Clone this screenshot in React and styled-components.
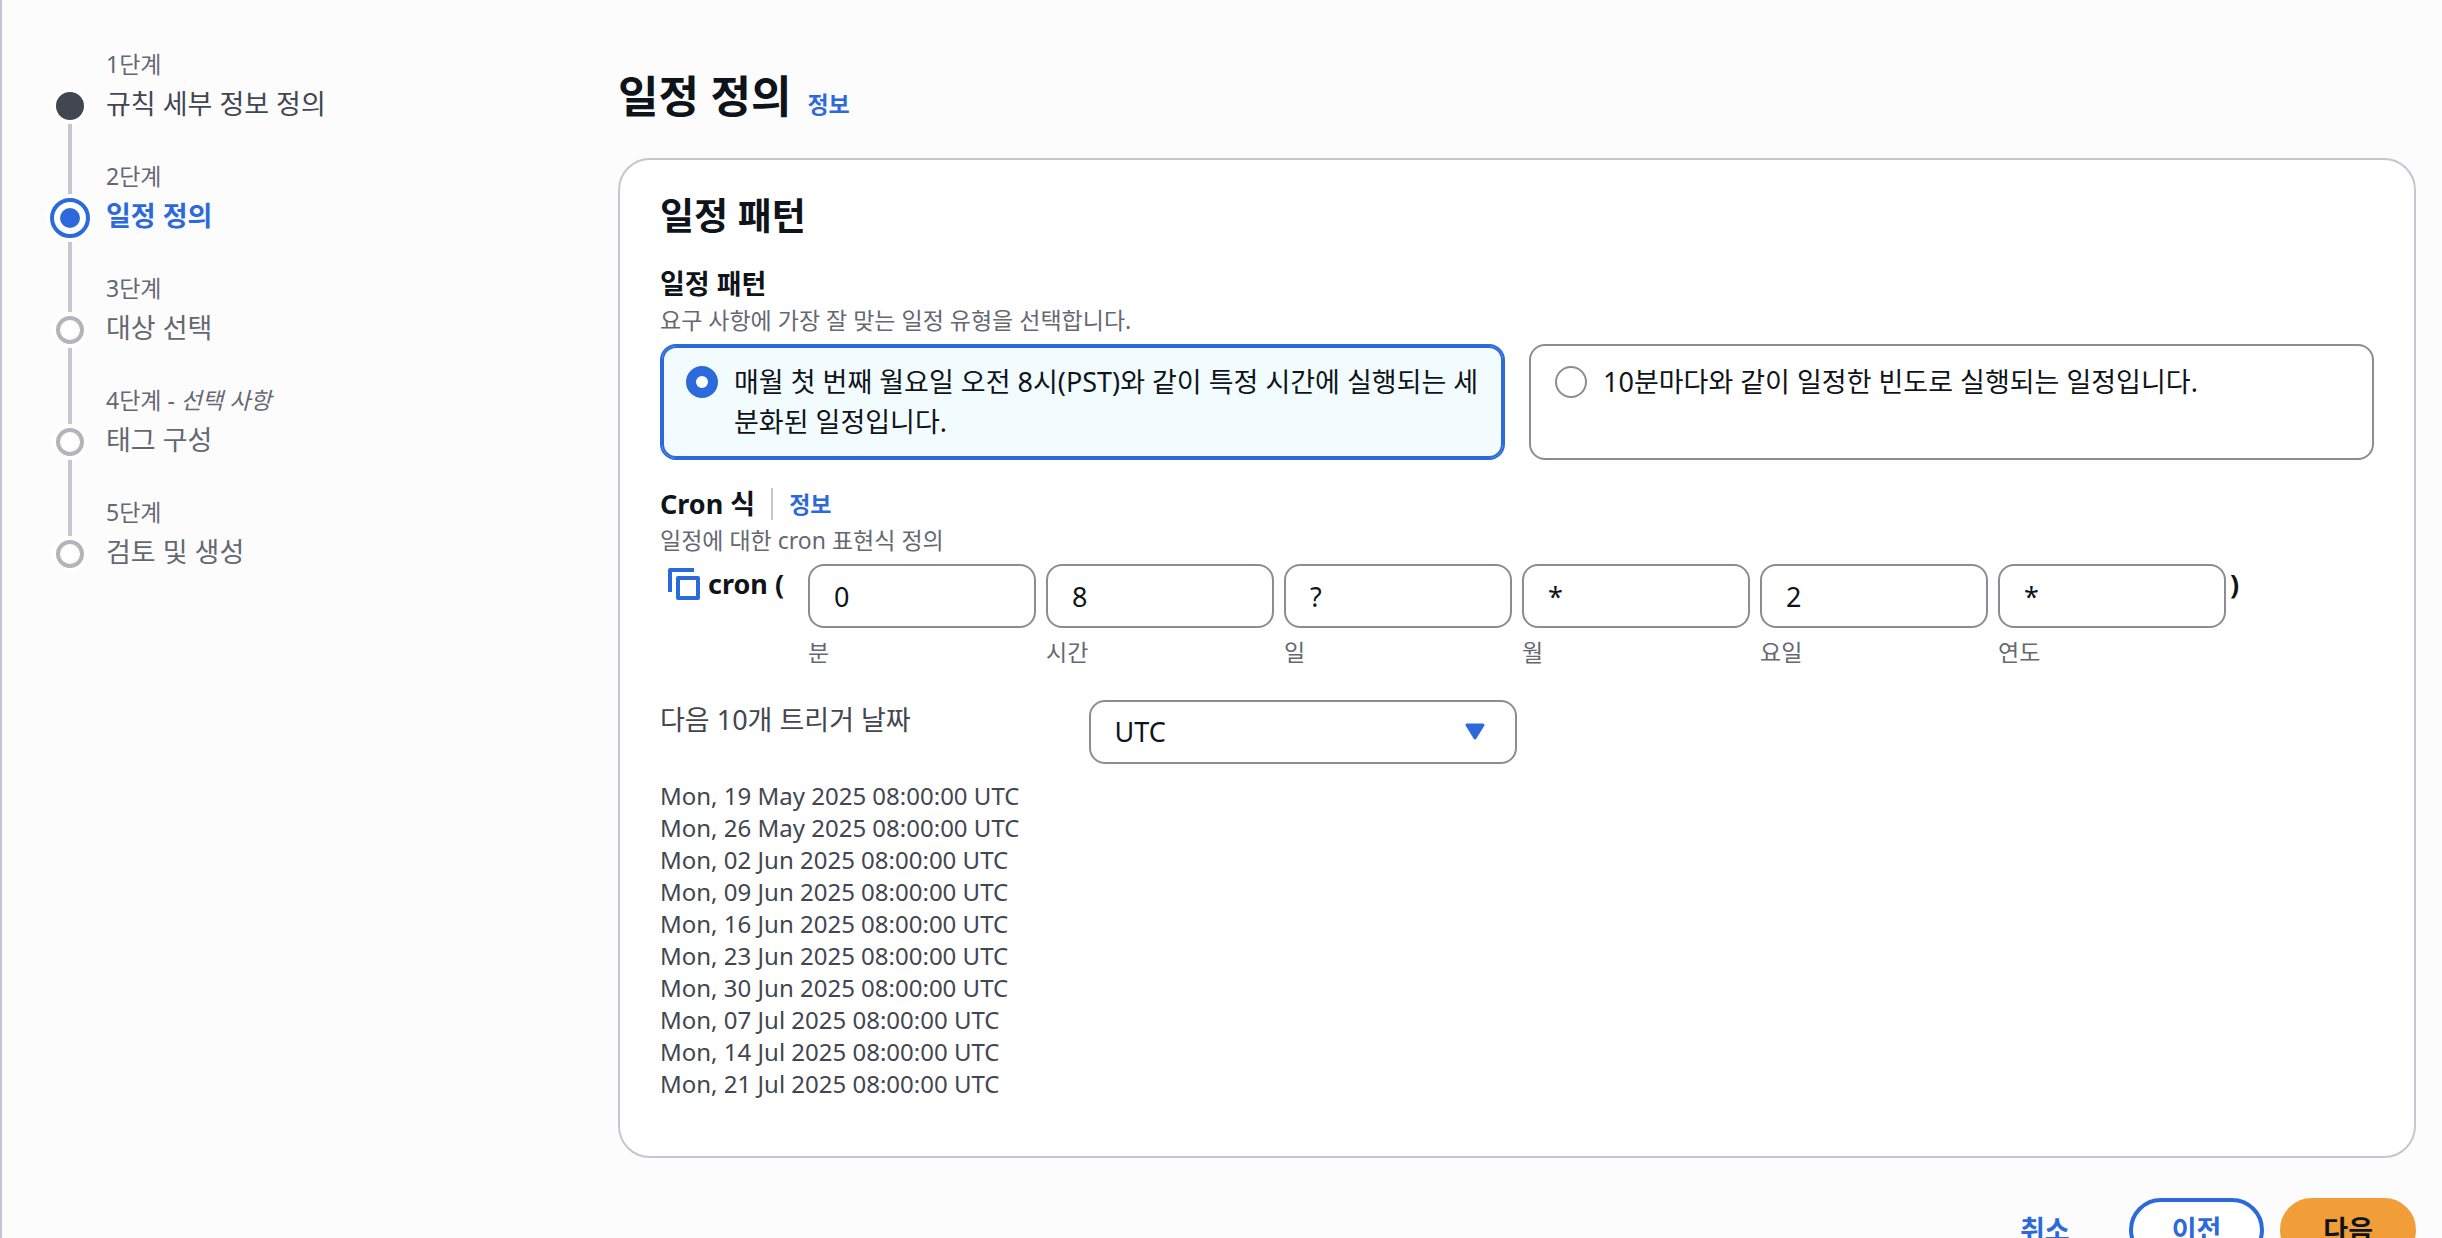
import React, { useState } from "react";
import styled, { createGlobalStyle, css } from "styled-components";

const color = {
  page: "#fcfcfd",
  surface: "#ffffff",
  divider: "#c6c6cd",
  control: "#8c8c94",
  ring: "#b4b4bb",
  heading: "#0f141a",
  body: "#424650",
  muted: "#656871",
  accent: "#2c6adb",
  selected: "#f2fcff",
  primary: "#f29e38",
};

const GlobalStyle = createGlobalStyle`
  *, *::before, *::after { box-sizing: border-box; }
  html, body { margin: 0; background: ${color.page}; }
  body, input, select, button {
    font-family: "Noto Sans", "Noto Sans CJK KR", sans-serif;
    font-size: 27px;
    line-height: 40px;
  }
  body { color: ${color.body}; }
`;

const Shell = styled.div`
  display: grid;
  grid-template-columns: 544px minmax(0, 1fr);
  column-gap: 24px;
  height: 100vh;
  overflow: hidden;
  padding: 44px 26px 0 48px;
  border-left: 2px solid ${color.divider};
`;

const StepList = styled.ol`
  margin: 0;
  padding: 0;
  list-style: none;
`;

const Step = styled.li`
  display: grid;
  grid-template-columns: 40px minmax(0, 1fr);
  column-gap: 16px;
`;

const Rail = styled.div`
  display: flex;
  flex-direction: column;
  align-items: center;
`;

const Connector = styled.span`
  width: 4px;
  background: ${(p) => (p.$hidden ? "transparent" : color.divider)};
  ${(p) =>
    p.$before
      ? css`
          height: ${p.$active ? 42 : 48}px;
        `
      : css`
          flex: 1;
        `}
`;

const Marker = styled.span`
  position: relative;
  z-index: 1;
  flex: none;
  width: 28px;
  height: 28px;
  border-radius: 50%;
  box-shadow: 0 0 0 4px ${color.surface};
  background: ${(p) => (p.$state === "done" ? color.body : color.surface)};
  border: 4px solid ${(p) => (p.$state === "done" ? color.body : color.ring)};
`;

const ActiveMarker = styled(Marker)`
  width: 40px;
  height: 40px;
  padding: 6px;
  border-color: ${color.accent};
`;

const ActiveDot = styled.span`
  display: block;
  width: 20px;
  height: 20px;
  border-radius: 50%;
  background: ${color.accent};
`;

const StepText = styled.div`
  padding-bottom: 32px;
`;

const StepNumber = styled.div`
  font-size: 23px;
  color: ${color.muted};
`;

const stepTone = {
  done: css`
    color: ${color.body};
  `,
  active: css`
    color: ${color.accent};
    font-weight: 700;
  `,
  todo: css`
    color: ${color.muted};
  `,
};

const StepLink = styled.a`
  display: block;
  text-decoration: none;
  ${(p) => stepTone[p.$state]}
`;

const Main = styled.main`
  padding-top: 22px;
`;

const TitleRow = styled.header`
  display: flex;
  align-items: baseline;
  gap: 16px;
  margin-bottom: 32px;
`;

const Title = styled.h1`
  margin: 0;
  font-size: 44px;
  line-height: 60px;
  font-weight: 700;
  color: ${color.heading};
`;

const InfoLink = styled.a`
  font-size: 23px;
  font-weight: 700;
  color: ${color.accent};
  text-decoration: none;
`;

const Card = styled.section`
  padding: 32px 40px 56px;
  border: 2px solid ${color.divider};
  border-radius: 32px;
  background: ${color.surface};
`;

const CardTitle = styled.h2`
  margin: 0 0 24px;
  font-size: 37px;
  line-height: 48px;
  font-weight: 700;
  color: ${color.heading};
`;

const Group = styled.fieldset`
  min-width: 0;
  margin: 0 0 ${(p) => (p.$wide ? 32 : 24)}px;
  padding: 0;
  border: 0;
`;

const GroupLabel = styled.legend`
  display: flex;
  align-items: center;
  padding: 0;
  font-weight: 700;
  color: ${color.heading};
`;

const LabelInfo = styled(InfoLink)`
  margin-left: 16px;
  padding-left: 16px;
  border-left: 2px solid ${color.divider};
  line-height: 32px;
`;

const Hint = styled.p`
  margin: 0;
  font-size: 23px;
  line-height: 32px;
  color: ${color.muted};
`;

const Tiles = styled.div`
  display: grid;
  grid-template-columns: 1fr 1fr;
  gap: 24px;
  margin-top: 8px;
`;

const Tile = styled.label`
  display: flex;
  align-items: flex-start;
  gap: 16px;
  padding: 16px 16px 16px 24px;
  border: 2px solid ${(p) => (p.$selected ? color.accent : color.control)};
  box-shadow: ${(p) => (p.$selected ? `inset 0 0 0 2px ${color.accent}` : "none")};
  border-radius: 16px;
  background: ${(p) => (p.$selected ? color.selected : color.surface)};
  color: ${color.heading};
`;

const Radio = styled.input`
  appearance: none;
  flex: none;
  width: 32px;
  height: 32px;
  margin: 4px 0 0;
  border: 2px solid ${color.control};
  border-radius: 50%;
  background: ${color.surface};
  &:checked {
    border: 10px solid ${color.accent};
  }
`;

const CronRow = styled.div`
  display: flex;
  align-items: flex-start;
  margin-top: 8px;
`;

const CronPrefix = styled.div`
  display: flex;
  flex: none;
  align-items: center;
  gap: 8px;
  width: 148px;
  padding-left: 8px;
  font-weight: 700;
  color: ${color.heading};
`;

const CronSuffix = styled.span`
  padding-left: 4px;
  font-weight: 700;
  color: ${color.heading};
`;

const CopyButton = styled.button`
  display: flex;
  padding: 0;
  border: 0;
  background: none;
  color: ${color.accent};
`;

const CronFields = styled.div`
  display: grid;
  grid-template-columns: repeat(6, minmax(0, 228px));
  gap: 10px;
`;

const CronField = styled.label`
  display: flex;
  flex-direction: column;
  gap: 8px;
  font-size: 23px;
  line-height: 32px;
  color: ${color.muted};
`;

const controlBox = css`
  width: 100%;
  height: 64px;
  padding: 0 24px;
  border: 2px solid ${color.control};
  border-radius: 16px;
  background: ${color.surface};
  color: ${color.heading};
`;

const TextInput = styled.input`
  ${controlBox}
`;

const TriggerRow = styled.div`
  display: grid;
  grid-template-columns: repeat(4, minmax(0, 1fr));
  margin-bottom: 16px;
`;

const SelectWrap = styled.div`
  display: grid;
  align-items: center;
  & > * {
    grid-area: 1 / 1;
  }
  & > svg {
    justify-self: end;
    margin-right: 32px;
    pointer-events: none;
  }
`;

const Select = styled.select`
  ${controlBox}
  appearance: none;
`;

const Dates = styled.ul`
  margin: 0;
  padding: 0;
  list-style: none;
  font-size: 24px;
  line-height: 32px;
`;

const Actions = styled.footer`
  display: flex;
  justify-content: flex-end;
  gap: 16px;
  margin-top: 40px;
`;

const buttonKinds = {
  link: css`
    border-color: transparent;
    background: transparent;
    color: ${color.accent};
  `,
  normal: css`
    border-color: ${color.accent};
    background: ${color.surface};
    color: ${color.accent};
  `,
  primary: css`
    border-color: ${color.primary};
    background: ${color.primary};
    color: ${color.heading};
  `,
};

const Button = styled.button`
  height: 64px;
  padding: 0 39px;
  border: 4px solid;
  border-radius: 32px;
  font-weight: 700;
  ${(p) => buttonKinds[p.$kind]}
`;

const steps = [
  { label: "1단계", title: "규칙 세부 정보 정의", state: "done" },
  { label: "2단계", title: "일정 정의", state: "active" },
  { label: "3단계", title: "대상 선택", state: "todo" },
  { label: "4단계", optional: "선택 사항", title: "태그 구성", state: "todo" },
  { label: "5단계", title: "검토 및 생성", state: "todo" },
];

const patterns = [
  { id: "cron", text: "매월 첫 번째 월요일 오전 8시(PST)와 같이 특정 시간에 실행되는 세분화된 일정입니다." },
  { id: "rate", text: "10분마다와 같이 일정한 빈도로 실행되는 일정입니다." },
];

const cronParts = [
  ["분", "0"],
  ["시간", "8"],
  ["일", "?"],
  ["월", "*"],
  ["요일", "2"],
  ["연도", "*"],
];

const days = [
  "19 May", "26 May", "02 Jun", "09 Jun", "16 Jun",
  "23 Jun", "30 Jun", "07 Jul", "14 Jul", "21 Jul",
];

function CopyIcon() {
  return (
    <svg width="32" height="32" viewBox="0 0 32 32" fill="none" stroke="currentColor" strokeWidth="4" aria-hidden="true">
      <path d="M2 24V2h24" strokeLinejoin="round" />
      <rect x="10" y="10" width="20" height="20" strokeLinejoin="round" />
    </svg>
  );
}

function Caret() {
  return (
    <svg width="20" height="18" viewBox="0 0 20 18" aria-hidden="true">
      <path d="M2 2h16L10 15z" fill={color.accent} stroke={color.accent} strokeWidth="3" strokeLinejoin="round" />
    </svg>
  );
}

export default function App() {
  const [pattern, setPattern] = useState("cron");

  return (
    <>
      <GlobalStyle />
      <Shell lang="ko">
        <nav>
          <StepList>
            {steps.map((s, i) => (
              <Step key={s.label}>
                <Rail>
                  <Connector $before $active={s.state === "active"} $hidden={i === 0} />
                  {s.state === "active" ? (
                    <ActiveMarker>
                      <ActiveDot />
                    </ActiveMarker>
                  ) : (
                    <Marker $state={s.state} />
                  )}
                  <Connector $hidden={i === steps.length - 1} />
                </Rail>
                <StepText>
                  <StepNumber>
                    {s.label}
                    {s.optional && (
                      <>
                        {" - "}
                        <i>{s.optional}</i>
                      </>
                    )}
                  </StepNumber>
                  <StepLink href="#" $state={s.state}>
                    {s.title}
                  </StepLink>
                </StepText>
              </Step>
            ))}
          </StepList>
        </nav>

        <Main>
          <TitleRow>
            <Title>일정 정의</Title>
            <InfoLink href="#">정보</InfoLink>
          </TitleRow>

          <Card>
            <CardTitle>일정 패턴</CardTitle>

            <Group>
              <GroupLabel>일정 패턴</GroupLabel>
              <Hint>요구 사항에 가장 잘 맞는 일정 유형을 선택합니다.</Hint>
              <Tiles>
                {patterns.map((p) => (
                  <Tile key={p.id} $selected={pattern === p.id}>
                    <Radio
                      type="radio"
                      name="pattern"
                      checked={pattern === p.id}
                      onChange={() => setPattern(p.id)}
                    />
                    <span>{p.text}</span>
                  </Tile>
                ))}
              </Tiles>
            </Group>

            <Group $wide>
              <GroupLabel>
                Cron 식<LabelInfo href="#">정보</LabelInfo>
              </GroupLabel>
              <Hint>일정에 대한 cron 표현식 정의</Hint>
              <CronRow>
                <CronPrefix>
                  <CopyButton type="button" aria-label="복사">
                    <CopyIcon />
                  </CopyButton>
                  cron (
                </CronPrefix>
                <CronFields>
                  {cronParts.map(([label, value]) => (
                    <CronField key={label}>
                      <TextInput type="text" defaultValue={value} />
                      {label}
                    </CronField>
                  ))}
                </CronFields>
                <CronSuffix>)</CronSuffix>
              </CronRow>
            </Group>

            <TriggerRow>
              <label htmlFor="timezone">다음 10개 트리거 날짜</label>
              <SelectWrap>
                <Select id="timezone" defaultValue="UTC">
                  <option>UTC</option>
                </Select>
                <Caret />
              </SelectWrap>
            </TriggerRow>

            <Dates>
              {days.map((d) => (
                <li key={d}>Mon, {d} 2025 08:00:00 UTC</li>
              ))}
            </Dates>
          </Card>

          <Actions>
            <Button type="button" $kind="link">취소</Button>
            <Button type="button" $kind="normal">이전</Button>
            <Button type="button" $kind="primary">다음</Button>
          </Actions>
        </Main>
      </Shell>
    </>
  );
}
